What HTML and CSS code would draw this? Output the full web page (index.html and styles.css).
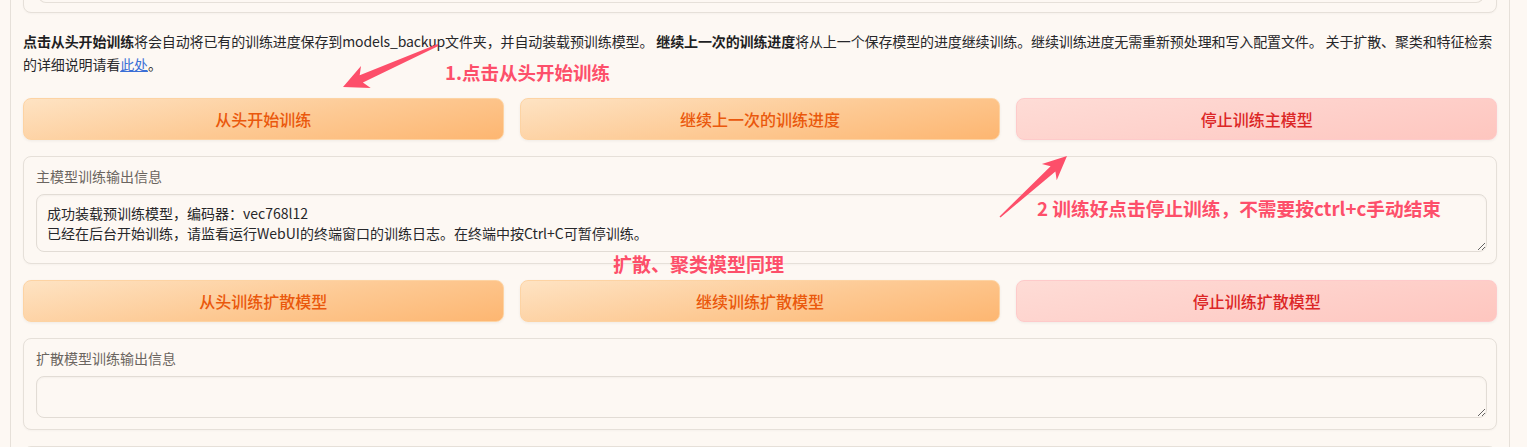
FILE: index.html
```html
<!DOCTYPE html>
<html lang="zh-CN">
<head>
<meta charset="utf-8">
<title>训练</title>
<link rel="stylesheet" href="styles.css">
</head>
<body>
<div class="page">
  <div class="panel">
    <div class="box top-box"><div class="top-inner"></div></div>
    <p class="desc"><b>点击从头开始训练</b>将会自动将已有的训练进度保存到models_backup文件夹，并自动装载预训练模型。 <b>继续上一次的训练进度</b>将从上一个保存模型的进度继续训练。继续训练进度无需重新预处理和写入配置文件。 关于扩散、聚类和特征检索的详细说明请看<a href="#">此处</a>。</p>
    <div class="btn-row">
      <button class="btn primary">从头开始训练</button>
      <button class="btn primary">继续上一次的训练进度</button>
      <button class="btn stop">停止训练主模型</button>
    </div>
    <div class="box out-box">
      <div class="label">主模型训练输出信息</div>
      <textarea class="output" readonly>成功装载预训练模型，编码器：vec768l12
已经在后台开始训练，请监看运行WebUI的终端窗口的训练日志。在终端中按Ctrl+C可暂停训练。</textarea>
    </div>
    <div class="btn-row">
      <button class="btn primary">从头训练扩散模型</button>
      <button class="btn primary">继续训练扩散模型</button>
      <button class="btn stop">停止训练扩散模型</button>
    </div>
    <div class="box out-box">
      <div class="label">扩散模型训练输出信息</div>
      <textarea class="output empty" readonly></textarea>
    </div>
    <div class="box bottom-box"></div>
  </div>

  <div class="note note1">1.点击从头开始训练</div>
  <div class="note note2">2 训练好点击停止训练，不需要按ctrl+c手动结束</div>
  <div class="note note3">扩散、聚类模型同理</div>
  <svg class="arrows" width="1527" height="447" viewBox="0 0 1527 447">
    <polygon points="438.4,45.9 362.9,82.6 370.7,87.9 343,87 361.0,65.9 359.7,75.2 437.6,44.1" />
    <polygon points="1000.5,217.6 1055.4,171.4 1056.7,180.3 1067,156 1041.9,164.1 1050.6,166.2 999.5,216.4" />
  </svg>
</div>
</body>
</html>
```
FILE: styles.css
```css
html, body {
  margin: 0;
  padding: 0;
  background: #fdf8f3;
  overflow: hidden;
}
body {
  font-family: "Noto Sans CJK SC", "Noto Sans", sans-serif;
  color: #27272a;
  width: 1527px;
  height: 447px;
}
.page {
  position: relative;
  width: 1527px;
  height: 447px;
  overflow: hidden;
}
.panel {
  margin-left: 10px;
  margin-top: -27px;
  width: 1500px;
  box-sizing: border-box;
  border-left: 1px solid #e6e0d9;
  border-right: 1px solid #e6e0d9;
  padding: 0 12px;
  display: flex;
  flex-direction: column;
  gap: 16px;
}
.box {
  box-sizing: border-box;
  border: 1px solid #e6e0d9;
  border-radius: 8px;
  background: #fdf8f3;
  box-shadow: 0 1px 2px rgba(0,0,0,0.03);
}
.top-box {
  height: 40px;
  padding: 0 12px;
  position: relative;
}
.top-inner {
  margin-left: 2px;
  height: 28px;
  border: 1px solid #e6e0d9;
  border-top: none;
  border-radius: 0 0 8px 8px;
}
.desc {
  margin: 1px 0 7px;
  font-size: 14px;
  line-height: 22.5px;
  letter-spacing: -0.12px;
  color: #27272a;
}
.desc b {
  font-weight: 700;
  color: #1f1f23;
}
.desc a {
  color: #3b6fd6;
  text-decoration: underline;
}
.btn-row {
  display: grid;
  grid-template-columns: 1fr 1fr 1fr;
  gap: 16px;
}
.btn {
  height: 42px;
  border-radius: 8px;
  font-family: "Noto Sans CJK SC", "Noto Sans", sans-serif;
  font-size: 16px;
  font-weight: 500;
  cursor: pointer;
  box-shadow: 0 1px 3px rgba(0,0,0,0.06);
}
.btn.primary {
  color: #ea580c;
  border: 1px solid #fdd3a3;
  background: linear-gradient(170deg, #fee3c3 0%, #fdc993 55%, #fdb671 100%);
}
.btn.stop {
  color: #dc2626;
  border: 1px solid #fecaca;
  background: linear-gradient(170deg, #fedcd6 0%, #fed0ca 55%, #fec6bf 100%);
}
.out-box {
  padding: 9px 12px 11px;
  display: flex;
  flex-direction: column;
  gap: 8px;
}
.label {
  font-size: 14px;
  line-height: 20px;
  color: #6b6560;
}
.output {
  box-sizing: border-box;
  width: 1451px;
  height: 58px;
  padding: 8px 10px;
  border: 1px solid #e2dcd5;
  border-radius: 8px;
  background: #fdf8f3;
  font-family: "Noto Sans CJK SC", "Noto Sans", sans-serif;
  font-size: 14px;
  line-height: 20px;
  color: #27272a;
  box-shadow: inset 0 1px 2px rgba(0,0,0,0.04);
  resize: vertical;
  outline: none;
}
.output.empty {
  height: 42px;
}
.bottom-box {
  height: 40px;
}
.note {
  position: absolute;
  font-family: "Noto Sans CJK SC", sans-serif;
  font-weight: 700;
  font-size: 18.5px;
  line-height: 24px;
  color: #fd4f6a;
  white-space: nowrap;
}
.note1 { left: 445px; top: 60px; }
.note2 { left: 1037px; top: 196px; font-size: 18.7px; }
.note3 { left: 613px; top: 252px; font-size: 19px; }
.arrows {
  position: absolute;
  left: 0;
  top: 0;
  pointer-events: none;
}
.arrows polygon {
  fill: #fd4f6a;
}
```
